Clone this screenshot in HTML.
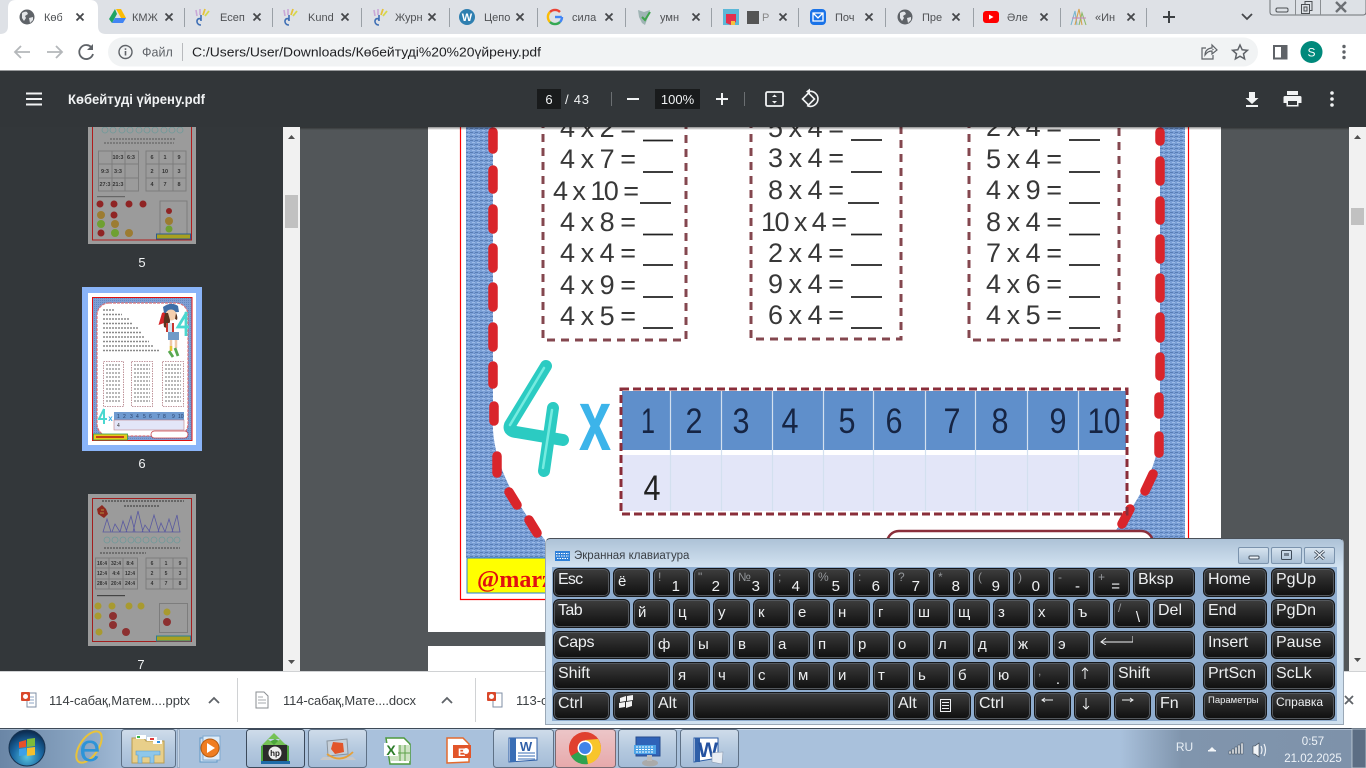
<!DOCTYPE html>
<html lang="ru"><head><meta charset="utf-8"><title>Көбейтуді үйрену.pdf</title>
<style>
html,body{margin:0;padding:0;width:1366px;height:768px;overflow:hidden;background:#fff;font-family:"Liberation Sans","Noto Sans CJK SC",sans-serif}
svg.base{position:absolute;left:0;top:0}
svg text{font-family:"Liberation Sans","DejaVu Sans",sans-serif}
.kb{position:absolute;left:545px;top:538px;width:799px;height:187px;border:1px solid #9aa8b6;border-top-color:#4a5058;border-radius:5px 5px 0 0;box-sizing:border-box;background:linear-gradient(#adc2d7 0,#d3e3f1 29px,#cfe0ef 100%)}
.blue{position:absolute;left:552px;top:567px;width:785px;height:154px;background:#8fadcf}
.ttl{position:absolute;left:574px;top:549px;font-size:11.5px;line-height:14px;color:#3a3f45;white-space:nowrap}
.wb{position:absolute;top:547px;height:17px;width:31px;box-sizing:border-box;border:1px solid #7b93ad;border-radius:2px;background:linear-gradient(#d6e3ef,#a9bfd5)}
.kr{position:absolute;left:0;width:0}
.k{position:absolute;top:0;height:100%;box-sizing:border-box;border:1px solid #15171a;border-radius:6px;box-shadow:inset 0 0 0 1px #54585d;background:linear-gradient(#3e3e3e 0,#2c2c2c 35%,#0f0f0f 100%);color:#eef0f2;font-size:16px;line-height:20px;padding:1px 0 0 4px;white-space:nowrap;overflow:hidden}
.l{font-size:15px;line-height:24px}
.k i{position:absolute;left:4px;top:1px;font-style:normal;font-size:12px;line-height:14px;color:#94979b}
.k b{position:absolute;right:9px;bottom:1px;font-weight:normal;font-size:15px;line-height:16px;color:#eef0f2}
</style></head><body>
<svg class="base" width="1366" height="768" viewBox="0 0 1366 768" xmlns="http://www.w3.org/2000/svg">
<defs>
<pattern id="denim" width="5" height="4" patternUnits="userSpaceOnUse"><rect width="5" height="4" fill="#7a9fd6"/><rect x="0" y="0" width="3" height="1" fill="#587db5"/><rect x="2" y="2" width="3" height="1" fill="#9cbbe8"/><rect x="4" y="1" width="1" height="1" fill="#6488c0"/></pattern>
<pattern id="denim2" width="2" height="2" patternUnits="userSpaceOnUse"><rect width="2" height="2" fill="#7f9fd4"/><rect width="1" height="1" fill="#6688c0"/></pattern>
<g id="cl"><path d="M-3.5-3.5L3.5 3.5M3.5-3.5L-3.5 3.5" stroke="#45474a" stroke-width="1.8" fill="none"/></g>
<g id="globe"><circle r="7.5" fill="#5f6368"/><path d="M-5-4q3-2 5-1l1 2-3 2 1 2-2 3-2-3zM2 1l4-1 0 3-3 3z" fill="#e3e5e8"/></g>
<g id="hand"><path d="M-1 8c-4 0-5-4-3-6 2-1 3 0 3 2v-6" fill="none" stroke="#3f6fb5" stroke-width="1.6"/><path d="M-5-1l-1-6M-2-2v-6" stroke="#c9a7d6" stroke-width="1.6"/><path d="M1-2l2-6" stroke="#e6c13c" stroke-width="1.8"/><path d="M3-1l4-5" stroke="#d7d84b" stroke-width="1.8"/></g>
<g id="gg"><path d="M6.8 0H0" stroke="#4285f4" stroke-width="2.4"/><path d="M5-5A7 7 0 0 0-5-5" fill="none" stroke="#ea4335" stroke-width="2.4"/><path d="M-5-5A7 7 0 0 0-5 5" fill="none" stroke="#fbbc05" stroke-width="2.4"/><path d="M-5 5A7 7 0 0 0 5 5" fill="none" stroke="#34a853" stroke-width="2.4"/><path d="M5 5A7 7 0 0 0 7 0" fill="none" stroke="#4285f4" stroke-width="2.4"/></g>
<linearGradient id="tb" x1="0" x2="1" y1="0" y2="0"><stop offset="0" stop-color="#6a86a6"/><stop offset=".06" stop-color="#8aa5c2"/><stop offset=".1" stop-color="#a9c1dc"/><stop offset=".82" stop-color="#a9c1dc"/><stop offset=".865" stop-color="#8095ad"/><stop offset="1" stop-color="#7e92aa"/></linearGradient>
<linearGradient id="btn" x1="0" x2="0" y1="0" y2="1"><stop offset="0" stop-color="#cfdcea"/><stop offset=".5" stop-color="#b5c9df"/><stop offset="1" stop-color="#a4bcd7"/></linearGradient>
<linearGradient id="btnc" x1="0" x2="0" y1="0" y2="1"><stop offset="0" stop-color="#ecc6c8"/><stop offset="1" stop-color="#e7a9ab"/></linearGradient>
<radialGradient id="orb" cx=".5" cy=".75" r=".7"><stop offset="0" stop-color="#58c2dd"/><stop offset=".55" stop-color="#1b6aa5"/><stop offset="1" stop-color="#0c2f55"/></radialGradient>
<linearGradient id="sh" x1="0" x2="0" y1="0" y2="1"><stop offset="0" stop-color="#000" stop-opacity=".45"/><stop offset="1" stop-color="#000" stop-opacity="0"/></linearGradient>
</defs>

<!-- tab strip -->
<rect width="1366" height="34" fill="#dee1e6"/>
<path d="M0 34Q8 34 8 26V8Q8 0 16 0H90Q98 0 98 8V26Q98 34 106 34Z" fill="#fff"/>
<g font-size="11" fill="#4f5154">
<use href="#globe" x="27" y="17"/><text x="44" y="21">Көб</text><rect x="62" y="8" width="8" height="18" fill="#fff" opacity=".7"/><use href="#cl" x="80" y="17"/>
<path d="M116 9h5l5 9h-5z" fill="#fbbc05"/><path d="M115 9l-6 10 3 4 5-9z" fill="#1fa463"/><path d="M112 23h11l3-5h-11z" fill="#4285f4"/><text x="132" y="21">КМЖ</text><use href="#cl" x="169" y="17"/>
<use href="#hand" x="202" y="17"/><text x="220" y="21">Есеп</text><use href="#cl" x="257" y="17"/>
<use href="#hand" x="290" y="17"/><text x="308" y="21">Kund</text><use href="#cl" x="345" y="17"/>
<use href="#hand" x="380" y="17"/><text x="395" y="21">Журн</text><use href="#cl" x="432" y="17"/>
<circle cx="467" cy="17" r="8" fill="#2f7fb0"/><text x="467" y="21" text-anchor="middle" font-size="11" font-weight="bold" fill="#fff" font-family="Liberation Serif">W</text><text x="484" y="21">Цепо</text><use href="#cl" x="520" y="17"/>
<use href="#gg" x="555" y="17"/><text x="572" y="21">сила</text><use href="#cl" x="609" y="17"/>
<path d="M638 10l6 2 6-2-2 7-3 8-3-2-3-6z" fill="#9fb4b4"/><path d="M642 17l3 3 5-8" fill="none" stroke="#3fa34d" stroke-width="2"/><text x="660" y="21">умн</text><use href="#cl" x="696" y="17"/>
<rect x="723" y="9" width="16" height="16" fill="#5bb8d8"/><path d="M726 14h10v8l-5 3-5-2z" fill="#e3304e"/><rect x="731" y="21" width="4" height="4" fill="#f6c23c"/><rect x="747" y="11" width="12" height="13" fill="#555"/><text x="762" y="21" fill="#888">P</text><use href="#cl" x="783" y="17"/>
<rect x="810" y="9" width="16" height="16" rx="4" fill="#1a73e8"/><path d="M813 13h10v8h-10zM813 13l5 5 5-5" fill="none" stroke="#fff" stroke-width="1.3"/><text x="835" y="21">Поч</text><use href="#cl" x="869" y="17"/>
<use href="#globe" x="905" y="17"/><text x="922" y="21">Пре</text><use href="#cl" x="956" y="17"/>
<rect x="983" y="11" width="16" height="12" rx="3" fill="#f00"/><path d="M989 14.500l4.500 2.500-4.500 2.500z" fill="#fff"/><text x="1007" y="21">Әле</text><use href="#cl" x="1044" y="17"/>
<g fill="none" stroke-width="1.1"><path d="M1071 25l4-14 2 14" stroke="#7bb6cf"/><path d="M1075 25l4-16 3 16" stroke="#d7a24f"/><path d="M1079 25l3-12 4 12" stroke="#8db96a"/><path d="M1072 18h14" stroke="#c887b9"/></g><text x="1095" y="21">«Ин</text><use href="#cl" x="1131" y="17"/>
</g>
<g stroke="#9aa0a6" stroke-width="1"><path d="M184.500 8v19M272.500 8v19M361.500 8v19M449.500 8v19M537.500 8v19M625.500 8v19M711.500 8v19M798.500 8v19M885.500 8v19M973.500 8v19M1060.500 8v19M1146.500 8v19"/></g>
<path d="M1163 17h12M1169 11v12" stroke="#3c4043" stroke-width="2"/>
<path d="M1242 14l5 5 5-5" fill="none" stroke="#45474a" stroke-width="1.8"/>
<!-- window controls -->
<path d="M1270 0v12q0 3 3 3h90q3 0 3-3V0" fill="#dde1e6" stroke="#6f7377"/>
<path d="M1295.500 0v15M1320.500 0v15" stroke="#8a8e92"/>
<rect x="1276" y="8" width="12" height="4" rx="1.500" fill="none" stroke="#4b4f53"/>
<path d="M1305 4V1.500h7v9h-2" fill="none" stroke="#4b4f53"/><rect x="1301.500" y="4.500" width="8" height="9" fill="none" stroke="#4b4f53"/><rect x="1304" y="7" width="3" height="4" fill="none" stroke="#4b4f53"/>
<path d="M1336 2l10 10M1346 2l-10 10" stroke="#6c7075" stroke-width="2.400"/>

<!-- toolbar -->
<rect y="34" width="1366" height="37" fill="#fff"/>
<rect x="108" y="37.500" width="1150" height="29" rx="14.500" fill="#f1f3f4"/>
<path d="M30 52H15M21 46l-6 6 6 6" fill="none" stroke="#b4b7ba" stroke-width="1.800"/>
<path d="M47 52h15M56 46l6 6-6 6" fill="none" stroke="#b4b7ba" stroke-width="1.800"/>
<path d="M92 48a7 7 0 1 0 1 6" fill="none" stroke="#5f6368" stroke-width="1.800"/><path d="M93 44v6h-6z" fill="#5f6368"/>
<circle cx="125.500" cy="52" r="6.500" fill="none" stroke="#5f6368" stroke-width="1.400"/><rect x="124.700" y="51" width="1.600" height="4.500" fill="#5f6368"/><rect x="124.700" y="48.300" width="1.600" height="1.600" fill="#5f6368"/>
<text x="142" y="56.500" font-size="12.500" fill="#5f6368">Файл</text>
<rect x="182" y="43" width="1" height="18" fill="#b8babd"/>
<text x="192" y="56.500" font-size="13" fill="#202124" textLength="349" lengthAdjust="spacingAndGlyphs">C:/Users/User/Downloads/Көбейтуді%20%20үйрену.pdf</text>
<path d="M1213 50v-1m0 6v4h-11v-11h4" fill="none" stroke="#5f6368" stroke-width="1.200"/><path d="M1205 55c0-5 4-7 7-7v-3l5 5-5 4v-3c-3 0-5 1-7 4z" fill="none" stroke="#5f6368" stroke-width="1.200"/>
<path d="M1240 45l2.200 4.800 5.200.5-3.900 3.500 1.100 5.100-4.600-2.700-4.600 2.700 1.100-5.100-3.900-3.500 5.200-.5z" fill="none" stroke="#5f6368" stroke-width="1.500"/>
<rect x="1274" y="46" width="12.500" height="12.500" fill="none" stroke="#5f6368" stroke-width="2"/><rect x="1281" y="46" width="5.500" height="12.500" fill="#5f6368"/>
<ellipse cx="1311.500" cy="52" rx="11" ry="11" fill="#00897b"/><text x="1311.500" y="56.500" text-anchor="middle" font-size="12" fill="#fff">S</text>
<circle cx="1344" cy="46.500" r="1.700" fill="#5f6368"/><circle cx="1344" cy="52" r="1.700" fill="#5f6368"/><circle cx="1344" cy="57.500" r="1.700" fill="#5f6368"/>

<!-- main -->
<rect x="300" y="127" width="1049" height="544" fill="#525659"/>
<rect x="428" y="127" width="793" height="505" fill="#fff"/>
<rect x="428" y="646" width="793" height="25" fill="#fff"/>
<!-- worksheet -->
<path d="M466 127H493V430Q496 480 545 540V558H466Z" fill="url(#denim)"/>
<path d="M1160 127H1185V540H1108Q1158 480 1160 430Z" fill="url(#denim)"/>
<path d="M460.500 127V599.500H1188.500V127" fill="none" stroke="#f00" stroke-width="1.200"/>
<g fill="none" stroke="#d9252b" stroke-width="9.500" stroke-linecap="round">
<path d="M493 132v17M493 170v19M493 209v20M493 248v20M493 287v20M493 327v20M493 366v18M494 406v15M497 456v17M509 492l8 13M529 520l8 13"/>
<path d="M1160 132v9M1160 161v20M1160 201v19M1160 239v20M1160 278v20M1160 317v21M1160 357v19M1159 397v17M1159 436v17M1153 474l-8 17M1130 509l-8 15"/>
</g>
<rect x="467" y="558" width="90" height="35" fill="#ff0" stroke="#2a7fd0" stroke-width="1"/>
<text x="477" y="587" font-size="24" font-weight="bold" fill="#e01010" style="font-family:'Liberation Serif',serif">@marz</text>
<rect x="887" y="531" width="266" height="30" rx="12" fill="#fff" stroke="#8a2e3a" stroke-width="2.500"/>
<!-- column boxes -->
<g fill="none" stroke="#84474f" stroke-width="3" stroke-dasharray="8 6">
<path d="M543 120V340H686V120"/><path d="M751 120V339H901V120"/><path d="M969 120V340H1119V120"/>
</g>
<g font-size="27" fill="#383838" style="font-family:'Liberation Sans',sans-serif">
<text x="560" y="137" textLength="76">4 x 2 =</text><text x="560" y="168" textLength="76">4 x 7 =</text><text x="553" y="200" textLength="86">4 x 10 =</text><text x="560" y="231" textLength="76">4 x 8 =</text><text x="560" y="262" textLength="76">4 x 4 =</text><text x="560" y="294" textLength="76">4 x 9 =</text><text x="560" y="325" textLength="76">4 x 5 =</text>
<text x="768" y="137" textLength="76">5 x 4 =</text><text x="768" y="167" textLength="76">3 x 4 =</text><text x="768" y="199" textLength="76">8 x 4 =</text><text x="761" y="231" textLength="86">10 x 4 =</text><text x="768" y="262" textLength="76">2 x 4 =</text><text x="768" y="293" textLength="76">9 x 4 =</text><text x="768" y="324" textLength="76">6 x 4 =</text>
<text x="986" y="136" textLength="76">2 x 4 =</text><text x="986" y="168" textLength="76">5 x 4 =</text><text x="986" y="199" textLength="76">4 x 9 =</text><text x="986" y="231" textLength="76">8 x 4 =</text><text x="986" y="262" textLength="76">7 x 4 =</text><text x="986" y="293" textLength="76">4 x 6 =</text><text x="986" y="324" textLength="76">4 x 5 =</text>
</g>
<path d="M643 140.500h30M643 172h30M640 203h31M643 234.500h30M643 265h30M643 297h30M643 328h30M851 140h31M851 172h31M848 203h31M851 234.500h31M851 265h31M851 297h31M851 328h31M1069 140h31M1069 172h31M1069 203h31M1069 234.500h31M1069 265h31M1069 297h31M1069 328h31" stroke="#222" stroke-width="1.800" fill="none"/>
<!-- big 4 and table -->
<path d="M546 366L510 425Q508 431 516 432L563 440M553 408L544 471" fill="none" stroke="#2bcbc2" stroke-width="12" stroke-linecap="round" stroke-linejoin="round"/>
<path d="M544 368L510 425M552 410L543 468" fill="none" stroke="#75ebe0" stroke-width="2.500" stroke-linecap="round"/>
<text transform="translate(595 450) scale(1 1.500)" text-anchor="middle" font-size="58" font-weight="bold" fill="#3cb4ea">x</text>
<rect x="622" y="391" width="504" height="59" fill="#5f8fcb"/>
<rect x="622" y="450" width="504" height="5" fill="#fff"/>
<rect x="622" y="455" width="504" height="56" fill="#e3e6f8"/>
<path d="M670.500 391V511M721.500 391V511M772.500 391V511M823.500 391V511M873.500 391V511M925.500 391V511M975.500 391V511M1027.500 391V511M1078.500 391V511" stroke="#d3e0ef" stroke-width="1.200"/>
<rect x="621" y="389" width="506" height="125" fill="none" stroke="#8a2e3a" stroke-width="3" stroke-dasharray="8 4"/>
<g font-size="35" fill="#162544" text-anchor="middle">
<text x="648" y="433" textLength="14" lengthAdjust="spacingAndGlyphs">1</text><text x="694" y="433" textLength="17" lengthAdjust="spacingAndGlyphs">2</text><text x="741" y="433" textLength="17" lengthAdjust="spacingAndGlyphs">3</text><text x="790" y="433" textLength="17" lengthAdjust="spacingAndGlyphs">4</text><text x="847" y="433" textLength="17" lengthAdjust="spacingAndGlyphs">5</text><text x="894" y="433" textLength="17" lengthAdjust="spacingAndGlyphs">6</text><text x="952" y="433" textLength="17" lengthAdjust="spacingAndGlyphs">7</text><text x="1000" y="433" textLength="17" lengthAdjust="spacingAndGlyphs">8</text><text x="1058" y="433" textLength="17" lengthAdjust="spacingAndGlyphs">9</text><text x="1104" y="433" textLength="33" lengthAdjust="spacingAndGlyphs">10</text>
<text x="652" y="500" fill="#222" textLength="17" lengthAdjust="spacingAndGlyphs">4</text></g>
<rect x="300" y="127" width="1049" height="3" fill="url(#sh)"/>
<!-- main scrollbar -->
<rect x="1349" y="127" width="17" height="544" fill="#f1f1f1"/>
<rect x="1351" y="208" width="13" height="17" fill="#c1c1c1"/>
<path d="M1354 139l3.500-4 3.500 4z" fill="#505050"/><path d="M1354 658l3.500 4 3.500-4z" fill="#505050"/>

<!-- sidebar -->
<rect x="0" y="127" width="283" height="544" fill="#33373a"/>
<rect x="283" y="127" width="17" height="544" fill="#f1f1f1"/>
<rect x="285" y="195" width="13" height="33" fill="#c1c1c1"/>
<path d="M288 139l3.500-4 3.500 4z" fill="#505050"/><path d="M288 660l3.500 4 3.500-4z" fill="#505050"/>
<!-- thumb 5 -->
<rect x="88" y="127" width="108" height="117" fill="#9b9b9b"/>
<path d="M92.500 127V240H191.500V127" fill="none" stroke="#b01c1c" stroke-width="1"/>
<g fill="none" stroke="#6e9a9a" stroke-width=".8"><circle cx="105" cy="130" r="3"/><circle cx="113" cy="130" r="3"/><circle cx="122" cy="130" r="3"/><circle cx="130" cy="130" r="3"/><circle cx="139" cy="130" r="3"/><circle cx="147" cy="130" r="3"/><circle cx="155" cy="130" r="3"/><circle cx="164" cy="130" r="3"/><circle cx="172" cy="130" r="3"/><circle cx="180" cy="130" r="3"/></g>
<path d="M110 139h65M104 143h70" stroke="#666" stroke-width="1.200" stroke-dasharray="2 1"/>
<g fill="none" stroke="#7d7d7d" stroke-width="1"><path d="M98.500 151h40v40h-40zM98.500 164h40M98.500 178h40M112 151v40M125 151v40M146 151h40v40h-40zM146 164h40M146 178h40M159 151v40M173 151v40"/><rect x="160" y="201" width="27" height="34"/></g>
<g font-size="5.500" font-weight="bold" fill="#333" text-anchor="middle"><text x="118" y="159">10:3</text><text x="131" y="159">6:3</text><text x="105" y="173">9:3</text><text x="118" y="173">3:3</text><text x="105" y="186">27:3</text><text x="118" y="186">21:3</text><text x="152" y="159">6</text><text x="165" y="159">1</text><text x="179" y="159">9</text><text x="152" y="173">2</text><text x="165" y="173">10</text><text x="179" y="173">3</text><text x="152" y="186">4</text><text x="165" y="186">7</text><text x="179" y="186">8</text></g>
<rect x="97" y="196" width="28" height="1.200" fill="#666"/>
<g fill="#8f2424"><circle cx="100" cy="204" r="3.500"/><circle cx="114" cy="204" r="3.500"/><circle cx="129" cy="204" r="3.500"/><circle cx="143" cy="204" r="3.500"/><circle cx="114" cy="215" r="3.500"/><circle cx="169" cy="211" r="3"/><circle cx="101" cy="233" r="3.500"/></g>
<g fill="#9c7c32"><circle cx="101" cy="215" r="4"/><circle cx="115" cy="224" r="4"/><circle cx="129" cy="233" r="4"/><circle cx="169" cy="221" r="4"/></g>
<g fill="#6fa032"><circle cx="101" cy="224" r="4"/><circle cx="115" cy="233" r="4"/><circle cx="169" cy="229" r="3.500"/></g>
<rect x="156.500" y="234" width="34" height="5" fill="#a8a020" stroke="#2b5c8f"/>
<!-- thumb 6 -->
<rect x="82" y="287" width="120" height="164" fill="#8ab4f8"/>
<rect x="88" y="293" width="108" height="152" fill="#fff"/>
<rect x="92.500" y="297.500" width="99.500" height="143" fill="url(#denim2)" stroke="#e01010" stroke-width="1"/>
<rect x="97" y="303" width="91" height="133" rx="12" fill="#fff" stroke="#d9737b" stroke-width="1.200" stroke-dasharray="3 1"/>
<path d="M103 310h12M103 314.500h19M103 319h26M103 323.500h30M103 328h35M103 332.500h38M103 337h42M103 341.500h46M103 346h50M103 350.500h56" stroke="#8a8a8a" stroke-width="1.500" stroke-dasharray="2 1" fill="none"/>
<!-- girl -->
<path d="M158.500 325l3.500-12 7-3 1 12-6 1z" fill="#d42428"/>
<path d="M163 307q8-6 15-1l1 6-15 1z" fill="#3f6fa8"/>
<circle cx="171" cy="315" r="5.500" fill="#f5cfae"/><path d="M165 313q-2 9-1 14l5 2 1-9-2-7z" fill="#5a3420"/><path d="M176 313q2 4 1 7l-2-1z" fill="#5a3420"/>
<rect x="166" y="323" width="8" height="9" fill="#d4e4ef"/><path d="M167 323v9M173 323v9" stroke="#c8362f" stroke-width="2"/><rect x="168" y="332" width="11" height="8" fill="#6f9ac7"/>
<path d="M171 340v11M176 340v8" stroke="#f0c9a8" stroke-width="2.500"/><path d="M171 346v5" stroke="#e8c630" stroke-width="2.500"/><path d="M169 351l4 6M175 348l3 8" stroke="#58a850" stroke-width="2.800"/>
<path d="M187 312l-9 15h11M186 312v24" fill="none" stroke="#4ad8d0" stroke-width="2.800"/>
<!-- thumb tables -->
<g fill="#fff" stroke="#b07a82" stroke-width=".8" stroke-dasharray="1.500 1"><rect x="103.500" y="361.500" width="20" height="45"/><rect x="131.500" y="361.500" width="21" height="45"/><rect x="162.500" y="361.500" width="21" height="45"/></g>
<g fill="none" stroke="#a0a0a0" stroke-width="1.500" stroke-dasharray="2 1"><path d="M106 365h15M106 369h15M106 373h15M106 377h15M106 381h15M106 385h15M106 389h15M106 393h15M106 397h15M106 401h15M134 365h16M134 369h16M134 373h16M134 377h16M134 381h16M134 385h16M134 389h16M134 393h16M134 397h16M134 401h16M165 365h16M165 369h16M165 373h16M165 377h16M165 381h16M165 385h16M165 389h16M165 393h16M165 397h16M165 401h16"/></g>
<path d="M104 409l-5 10h8M104 409v15" fill="none" stroke="#4ad8d0" stroke-width="2"/>
<text x="110.500" y="421" font-size="8" font-weight="bold" text-anchor="middle" fill="#35aee6">x</text>
<rect x="114" y="412" width="70" height="8" fill="#6f9ad0"/><rect x="114" y="420" width="70" height="10" fill="#e3e6f8" stroke="#c08088" stroke-width=".6"/>
<g font-size="5" fill="#29406a"><text x="117" y="418">1</text><text x="123" y="418">2</text><text x="130" y="418">3</text><text x="136" y="418">4</text><text x="143" y="418">5</text><text x="149" y="418">6</text><text x="157" y="418">7</text><text x="163" y="418">8</text><text x="172" y="418">9</text><text x="178" y="418">10</text><text x="117" y="427" fill="#333">4</text></g>
<rect x="93.500" y="434" width="34" height="6" fill="#e8c81a" stroke="#31a04a" stroke-width=".8"/><rect x="96" y="436" width="28" height="2" fill="#c43f18"/>
<rect x="151" y="431" width="37" height="7" rx="3.500" fill="#fff" stroke="#c94048" stroke-width=".8"/>
<!-- thumb 7 -->
<rect x="88" y="494" width="108" height="152" fill="#9b9b9b"/>
<rect x="92.500" y="498.500" width="99" height="143" fill="none" stroke="#a31e1e" stroke-width="1"/>
<path d="M102 501h82M124 506h36" stroke="#555" stroke-width="1.500" stroke-dasharray="2 1"/>
<path d="M102 505l4 4 2 5-4 4-6-4-1-5z" fill="#8e2a20"/><path d="M101 510h3M100 513h4" stroke="#b09040"/>
<g fill="none" stroke="#5a5aa0" stroke-width=".8"><path d="M103 532l4-13 4 13zM112 532l3-8 5 8zM120 532l3-11 4 11zM126 532l5-16 4 16zM133 532l5-21 5 21zM142 532l3-7 5 7zM149 532l5-17 5 17zM158 532l3-9 4 9zM165 532l4-13 4 13zM172 532l5-17 3 17z"/></g>
<g fill="none" stroke="#6e9a9a" stroke-width=".8"><circle cx="107" cy="540" r="3"/><circle cx="115" cy="540" r="3"/><circle cx="123" cy="540" r="3"/><circle cx="131" cy="540" r="3"/><circle cx="138" cy="540" r="3"/><circle cx="146" cy="540" r="3"/><circle cx="154" cy="540" r="3"/><circle cx="162" cy="540" r="3"/><circle cx="170" cy="540" r="3"/><circle cx="177" cy="540" r="3"/></g>
<path d="M104 548h76M100 553h46" stroke="#555" stroke-width="1.200" stroke-dasharray="2 1"/>
<g fill="none" stroke="#7d7d7d"><path d="M95.500 558h42v31h-42zM95.500 568h42M95.500 579h42M109 558v31M123 558v31M146 558h41v31h-41zM146 568h41M146 579h41M160 558v31M173 558v31"/><rect x="159.500" y="603.500" width="28" height="29"/></g>
<g font-size="5" font-weight="bold" fill="#333" text-anchor="middle"><text x="102" y="565">16:4</text><text x="116" y="565">32:4</text><text x="130" y="565">8:4</text><text x="102" y="575">12:4</text><text x="116" y="575">4:4</text><text x="130" y="575">12:4</text><text x="102" y="585">28:4</text><text x="116" y="585">20:4</text><text x="130" y="585">24:4</text><text x="152" y="565">6</text><text x="166" y="565">1</text><text x="180" y="565">9</text><text x="152" y="575">2</text><text x="166" y="575">5</text><text x="180" y="575">3</text><text x="152" y="585">4</text><text x="166" y="585">7</text><text x="180" y="585">8</text></g>
<rect x="97" y="595" width="28" height="1.200" fill="#444"/>
<g fill="#a89a30"><circle cx="98" cy="606" r="3.500"/><circle cx="112" cy="606" r="3.500"/><circle cx="129" cy="606" r="3.500"/><circle cx="141" cy="606" r="3.500"/><circle cx="98" cy="616" r="3.500"/><circle cx="99" cy="632" r="3.500"/><circle cx="167" cy="612" r="3.500"/></g>
<g fill="#8c3030"><circle cx="113" cy="616" r="4"/><circle cx="113" cy="625" r="4"/><circle cx="126" cy="632" r="4"/><circle cx="167" cy="622" r="4"/></g>
<rect x="156.500" y="636" width="34" height="5" fill="#a8a020" stroke="#2b7f8f"/>
<g fill="#f1f3f4" font-size="13" text-anchor="middle"><text x="142" y="267">5</text><text x="142" y="468">6</text><text x="141" y="669">7</text></g>

<!-- pdf toolbar -->
<rect y="70.500" width="1366" height="56.500" fill="#323639"/>
<path d="M26 93.500h16M26 99h16M26 104.500h16" stroke="#f1f3f4" stroke-width="2"/>
<text x="68" y="104" font-size="13.500" font-weight="bold" fill="#f1f3f4" textLength="137" lengthAdjust="spacingAndGlyphs">Көбейтуді үйрену.pdf</text>
<rect x="537" y="89" width="24" height="20" fill="#191b1c"/><text x="549" y="104" text-anchor="middle" font-size="13" fill="#f1f3f4">6</text>
<text x="565" y="104" font-size="13" fill="#f1f3f4" textLength="24">/ 43</text>
<rect x="611" y="92" width="1" height="14" fill="#6b6f72"/>
<path d="M627 99h12" stroke="#f1f3f4" stroke-width="2"/>
<rect x="655" y="89" width="45" height="20" fill="#191b1c"/><text x="677.500" y="104" text-anchor="middle" font-size="13" fill="#f1f3f4">100%</text>
<path d="M716 99h12M722 93v12" stroke="#f1f3f4" stroke-width="2"/>
<rect x="744" y="92" width="1" height="14" fill="#6b6f72"/>
<rect x="766" y="92" width="17" height="14" rx="1.500" fill="none" stroke="#f1f3f4" stroke-width="1.800"/><path d="M772 97l2.500-2.500L777 97zM772 101l2.500 2.500L777 101z" fill="#f1f3f4"/>
<path d="M809 91.500a7.500 7.500 0 1 1-2 14" fill="none" stroke="#f1f3f4" stroke-width="1.600"/><path d="M810 88.500v6l-4-3z" fill="#f1f3f4"/><path d="M808.500 93l-6 6 6 6 6-6z" fill="none" stroke="#f1f3f4" stroke-width="1.600"/>
<path d="M1249 92h6v6h3.500l-6.500 6-6.500-6h3.500z" fill="#f1f3f4"/><rect x="1246" y="105" width="12" height="2" fill="#f1f3f4"/>
<path d="M1287 91h11v4h-11zM1285 96h15q1.500 0 1.500 1.500V103h-3v3.500h-12V103h-3v-5.500q0-1.500 1.500-1.500z" fill="#f1f3f4"/><rect x="1288" y="101" width="9" height="4" fill="#323639"/>
<circle cx="1332" cy="93" r="1.800" fill="#f1f3f4"/><circle cx="1332" cy="99" r="1.800" fill="#f1f3f4"/><circle cx="1332" cy="105" r="1.800" fill="#f1f3f4"/>

<!-- shelf -->
<rect y="671" width="1366" height="57" fill="#fff"/><rect y="671" width="1366" height="1" fill="#d0d2d4"/>
<rect x="27" y="693" width="9" height="14" fill="#fff" stroke="#7f8fa6"/><path d="M29 697h5M29 700h5M29 703h5" stroke="#8ea4c4"/>
<rect x="21" y="692" width="9" height="9" rx="1" fill="#d9482b"/><circle cx="25.500" cy="696.500" r="2.500" fill="#fff"/>
<text x="49" y="705" font-size="13" fill="#3c4043" textLength="141">114-сабақ,Матем....pptx</text>
<path d="M209 703l5-5 5 5" fill="none" stroke="#5f6368" stroke-width="1.800"/>
<rect x="237" y="678" width="1" height="44" fill="#d0d2d4"/>
<path d="M256 692h8l4 4v12h-12z" fill="#fff" stroke="#8a8e92"/><path d="M258 697h5M258 700h8M258 703h8" stroke="#a5a8ac"/>
<text x="283" y="705" font-size="13" fill="#3c4043" textLength="133">114-сабақ,Мате....docx</text>
<path d="M442 703l5-5 5 5" fill="none" stroke="#5f6368" stroke-width="1.800"/>
<rect x="475" y="678" width="1" height="44" fill="#d0d2d4"/>
<rect x="493" y="693" width="9" height="14" fill="#fff" stroke="#7f8fa6"/><rect x="487" y="692" width="9" height="9" rx="1" fill="#d9482b"/><circle cx="491.500" cy="696.500" r="2.500" fill="#fff"/>
<text x="516" y="705" font-size="13" fill="#3c4043">113-с</text>
<path d="M1345 696l8 8M1353 696l-8 8" stroke="#5f6368" stroke-width="1.800"/>

<!-- taskbar -->
<rect y="728" width="1366" height="40" fill="url(#tb)"/>
<rect y="728" width="1366" height="1" fill="#3e4a58"/>
<rect y="729" width="1366" height="1" fill="#cfdceb" opacity=".6"/>
<circle cx="27" cy="748" r="18" fill="url(#orb)" stroke="#17324f"/>
<path d="M19 742l7-2v7l-7 1z" fill="#e8502a"/><path d="M27 739l8-1v8l-8 1z" fill="#7dbb3a"/><path d="M19 749l7-1v7l-7 1z" fill="#3da0e8"/><path d="M27 748l8-1v8l-8 1z" fill="#f5bf2c"/>
<ellipse cx="89" cy="747" rx="9" ry="18" transform="rotate(35 89 747)" fill="none" stroke="#e9c33a" stroke-width="2"/>
<text x="90" y="761" text-anchor="middle" font-size="38" fill="#2d94d8" style="font-family:'Liberation Sans',sans-serif">e</text>
<rect x="121.500" y="729.500" width="54" height="38" rx="3" fill="url(#btn)" stroke="#5f7186"/>
<rect x="177.500" y="729.500" width="2" height="38" fill="#c3d3e4" stroke="#7c90a7" stroke-width=".5"/>
<path d="M132 738h12l2 3h18v22h-32z" fill="#e8cf8a" stroke="#b89b4f"/><rect x="136" y="735" width="10" height="4" fill="#fff"/><rect x="137" y="736" width="3" height="2" fill="#39b54a"/><rect x="147" y="737" width="10" height="4" fill="#fff"/><rect x="150" y="738" width="4" height="2" fill="#e03a3a"/><rect x="153" y="740" width="9" height="4" fill="#fff"/><rect x="157" y="741" width="3" height="2" fill="#2d8fe0"/>
<path d="M136 751h24v4h-6v8h-4v-6h-8v6h-4v-8h-2z" fill="#8ec7ea" stroke="#5b9ac6" stroke-width=".6"/>
<rect x="200" y="738" width="17" height="24" fill="#c9dcef" stroke="#5f96c5"/><rect x="203" y="736" width="17" height="24" fill="#dfecf8" stroke="#7fa9cf"/>
<circle cx="210" cy="748" r="9" fill="#ef7d22" stroke="#b35c14"/><path d="M207 743l8 5-8 5z" fill="#fff"/>
<rect x="246.500" y="729.500" width="58" height="38" rx="3" fill="url(#btn)" stroke="#3c4a5b"/>
<path d="M261 746l14-7 14 7v18h-28z" fill="#4ca63c"/><path d="M268 739l6-6 6 6zM262 745l6-6 6 6zM274 745l6-6 6 6z" fill="#74c255"/>
<rect x="263" y="745" width="24" height="18" fill="#2b2b2b"/><rect x="261" y="761" width="29" height="3" fill="#1e6ca8"/><circle cx="275" cy="753" r="6.500" fill="#eee"/><text x="275" y="756" font-size="8" text-anchor="middle" font-weight="bold" fill="#222">hp</text>
<rect x="308.500" y="729.500" width="58" height="38" rx="3" fill="url(#btn)" stroke="#5f7186"/>
<path d="M327 741l20-2 1 15-20 2z" fill="#c6cfd8" stroke="#8a949e"/><path d="M333 742l10 1 1 9-9 2-4-5z" fill="#e2552a"/><path d="M323 757h30l3 3h-36z" fill="#c8c8c8"/><path d="M327 754q14 10 26-2" fill="none" stroke="#e5a13a" stroke-width="1.800"/>
<path d="M386 738h18l6 6v20h-20z" fill="#fff" stroke="#4f9a3e" stroke-width="1.500"/><rect x="390" y="745" width="20" height="16" fill="#cfe3c4"/><path d="M400 745v16M390 753h20M405 745v16" stroke="#5da14a"/><rect x="384" y="743" width="14" height="13" fill="#fff"/><text x="391" y="755" font-size="14" font-weight="bold" text-anchor="middle" fill="#2d7d2a">X</text>
<path d="M447 738h16l6 6v18l-22 1z" fill="#fff" stroke="#e36a2e" stroke-width="1.500"/><rect x="453" y="745" width="18" height="13" fill="#e2552a"/><text x="458" y="756" font-size="11" font-weight="bold" fill="#fff">E</text><circle cx="466" cy="751" r="3" fill="#fff"/>
<rect x="493.500" y="729.500" width="60" height="38" rx="3" fill="url(#btn)" stroke="#5f7186"/>
<path d="M509 738h28v22l-28 2z" fill="#fff" stroke="#2f5fa8" stroke-width="1"/><rect x="510" y="738" width="6" height="24" fill="#3a6eb5"/><path d="M518 753h17M518 756h17M518 759h17" stroke="#3a6eb5"/><text x="526" y="751" text-anchor="middle" font-size="13" font-weight="bold" fill="#2f5fa8">W</text>
<rect x="555.500" y="729.500" width="60" height="38" rx="3" fill="url(#btnc)" stroke="#7c6a72"/>
<circle cx="585" cy="748" r="16" fill="#e0402f"/><path d="M585 748L571 756A16 16 0 0 1 572 739Z" fill="#e0402f"/><path d="M585 748L571 756A16 16 0 0 0 588 764Z" fill="#2ea24f"/><path d="M585 748L588 764A16 16 0 0 0 598 739L585 740Z" fill="#f8c52b"/><circle cx="585" cy="748" r="7.500" fill="#fff"/><circle cx="585" cy="748" r="6" fill="#3f83e8"/>
<rect x="618.500" y="729.500" width="58" height="38" rx="3" fill="url(#btn)" stroke="#5f7186"/>
<rect x="636" y="737" width="24" height="19" fill="#2f63b8" stroke="#284d8e"/><rect x="634" y="745" width="22" height="9" fill="#4ea5e8"/><path d="M636 747h18M636 749.500h18M636 752h18" stroke="#fff" stroke-dasharray="2 1"/><ellipse cx="650" cy="763" rx="8" ry="3.500" fill="#aaa"/><rect x="647" y="755" width="5" height="6" fill="#bbb"/>
<rect x="680.500" y="729.500" width="58" height="38" rx="3" fill="url(#btn)" stroke="#5f7186"/>
<path d="M694 738h24v20l-24 4z" fill="#fff" stroke="#2f5fa8"/><rect x="695" y="738" width="5" height="24" fill="#2f5fa8"/><text x="708" y="757" text-anchor="middle" font-size="21" font-weight="bold" fill="#2452a0">W</text><path d="M712 753l11-1-1 12-10-2z" fill="#e8edf4" stroke="#8a9ab0" stroke-width=".6"/>
<!-- tray -->
<text x="1184.500" y="751" text-anchor="middle" font-size="12" fill="#e6edf4">RU</text>
<path d="M1208 751l4-4 4 4z" fill="#f2f5f8"/><rect x="1208" y="750" width="8" height="1.500" fill="#f2f5f8"/>
<g fill="#f5f7f9" stroke="#3a4652" stroke-width=".5"><rect x="1229" y="751" width="2" height="3"/><rect x="1232" y="749" width="2" height="5"/><rect x="1235" y="747" width="2" height="7"/><rect x="1238" y="745" width="2" height="9"/><rect x="1241" y="743" width="2" height="11"/></g>
<path d="M1253 746h2l4-3v14l-4-3h-2z" fill="#f2f5f8" stroke="#3a4652" stroke-width=".6"/><path d="M1261 746q2 4 0 8M1264 744q3 6 0 12" fill="none" stroke="#eef2f6" stroke-width="1.200"/>
<text x="1313" y="745" text-anchor="middle" font-size="11.500" fill="#eef3f8">0:57</text>
<text x="1313" y="762" text-anchor="middle" font-size="11.500" fill="#eef3f8">21.02.2025</text>
<rect x="1352" y="729" width="14" height="39" fill="#5c6e84" stroke="#c6d1dc" stroke-width=".8"/>
</svg>

<!-- on-screen keyboard -->
<div class="kb"></div>
<div class="blue"></div>
<svg style="position:absolute;left:555px;top:551px" width="15" height="11"><rect width="15" height="10" y="0" fill="#2f80d8"/><path d="M1 2.500h13M1 5h13M2 7.500h11" stroke="#fff" stroke-dasharray="1.500 1"/></svg>
<div class="ttl">Экранная клавиатура</div>
<div class="wb" style="left:1238px"><svg width="29" height="15" style="display:block"><rect x="10" y="8" width="10" height="3" rx="1" fill="#eef3f8" stroke="#3e4a58"/></svg></div>
<div class="wb" style="left:1271px"><svg width="29" height="15" style="display:block"><rect x="9.500" y="2.500" width="10" height="9" rx="1" fill="none" stroke="#3e4a58"/><rect x="12" y="5" width="5" height="3" fill="#3e4a58" opacity=".6"/></svg></div>
<div class="wb" style="left:1304px"><svg width="29" height="15" style="display:block"><path d="M10 3l9 8M19 3l-9 8" stroke="#3e4a58" stroke-width="3"/><path d="M10 3l9 8M19 3l-9 8" stroke="#eef3f8" stroke-width="1.200"/></svg></div>

<div class="kr" style="top:568px;height:29px">
<div class="k" style="left:553px;width:57px;letter-spacing:-.8px">Esc</div><div class="k l" style="left:613px;width:37px">ё</div>
<div class="k" style="left:653px;width:37px"><i>!</i><b>1</b></div><div class="k" style="left:693px;width:37px"><i>"</i><b>2</b></div><div class="k" style="left:733px;width:37px"><i>№</i><b>3</b></div><div class="k" style="left:773px;width:37px"><i>;</i><b>4</b></div><div class="k" style="left:813px;width:37px"><i>%</i><b>5</b></div><div class="k" style="left:853px;width:37px"><i>:</i><b>6</b></div><div class="k" style="left:893px;width:37px"><i>?</i><b>7</b></div><div class="k" style="left:933px;width:37px"><i>*</i><b>8</b></div><div class="k" style="left:973px;width:37px"><i>(</i><b>9</b></div><div class="k" style="left:1013px;width:37px"><i>)</i><b>0</b></div><div class="k" style="left:1053px;width:37px"><i>-</i><b>-</b></div><div class="k" style="left:1093px;width:37px"><i>+</i><b>=</b></div>
<div class="k" style="left:1133px;width:62px">Bksp</div><div class="k" style="left:1203px;width:64px">Home</div><div class="k" style="left:1271px;width:64px">PgUp</div>
</div>
<div class="kr" style="top:599px;height:29px">
<div class="k" style="left:553px;width:77px;letter-spacing:-.6px">Tab</div><div class="k l" style="left:633px;width:37px">й</div><div class="k l" style="left:673px;width:37px">ц</div><div class="k l" style="left:713px;width:37px">у</div><div class="k l" style="left:753px;width:37px">к</div><div class="k l" style="left:793px;width:37px">е</div><div class="k l" style="left:833px;width:37px">н</div><div class="k l" style="left:873px;width:37px">г</div><div class="k l" style="left:913px;width:37px">ш</div><div class="k l" style="left:953px;width:37px">щ</div><div class="k l" style="left:993px;width:37px">з</div><div class="k l" style="left:1033px;width:37px">х</div><div class="k l" style="left:1073px;width:37px">ъ</div>
<div class="k" style="left:1113px;width:37px"><i>/</i><b>\</b></div><div class="k" style="left:1153px;width:42px">Del</div><div class="k" style="left:1203px;width:64px">End</div><div class="k" style="left:1271px;width:64px">PgDn</div>
</div>
<div class="kr" style="top:631px;height:28px">
<div class="k" style="left:553px;width:97px;letter-spacing:-.3px">Caps</div><div class="k l" style="left:653px;width:37px">ф</div><div class="k l" style="left:693px;width:37px">ы</div><div class="k l" style="left:733px;width:37px">в</div><div class="k l" style="left:773px;width:37px">а</div><div class="k l" style="left:813px;width:37px">п</div><div class="k l" style="left:853px;width:37px">р</div><div class="k l" style="left:893px;width:37px">о</div><div class="k l" style="left:933px;width:37px">л</div><div class="k l" style="left:973px;width:37px">д</div><div class="k l" style="left:1013px;width:37px">ж</div><div class="k l" style="left:1053px;width:37px">э</div>
<div class="k" style="left:1093px;width:102px"><svg width="34" height="10" style="position:absolute;left:5px;top:3px"><path d="M34 1v6H2M7 3L2 7l5 3" fill="none" stroke="#eef0f2" stroke-width="1"/></svg></div><div class="k" style="left:1203px;width:64px">Insert</div><div class="k" style="left:1271px;width:64px">Pause</div>
</div>
<div class="kr" style="top:662px;height:28px">
<div class="k" style="left:553px;width:117px">Shift</div><div class="k l" style="left:673px;width:37px">я</div><div class="k l" style="left:713px;width:37px">ч</div><div class="k l" style="left:753px;width:37px">с</div><div class="k l" style="left:793px;width:37px">м</div><div class="k l" style="left:833px;width:37px">и</div><div class="k l" style="left:873px;width:37px">т</div><div class="k l" style="left:913px;width:37px">ь</div><div class="k l" style="left:953px;width:37px">б</div><div class="k l" style="left:993px;width:37px">ю</div>
<div class="k" style="left:1033px;width:37px"><i>,</i><b>.</b></div><div class="k" style="left:1073px;width:37px"><svg width="12" height="14" style="position:absolute;left:6px;top:3px"><path d="M5 13V2M2 5l3-3 3 3" fill="none" stroke="#eef0f2"/></svg></div><div class="k" style="left:1113px;width:82px">Shift</div><div class="k" style="left:1203px;width:64px">PrtScn</div><div class="k" style="left:1271px;width:64px">ScLk</div>
</div>
<div class="kr" style="top:692px;height:28px">
<div class="k" style="left:553px;width:57px">Ctrl</div>
<div class="k" style="left:613px;width:37px"><svg width="16" height="14" style="position:absolute;left:5px;top:2px"><path d="M1 3l6-2v5l-6 1zM8 1l6-1v5l-6 1zM0 8l6-1v5l-6 1zM7 7l6-1v5l-6 2z" fill="#f2f2f2"/></svg></div>
<div class="k" style="left:653px;width:37px">Alt</div><div class="k" style="left:693px;width:197px"></div><div class="k" style="left:893px;width:37px">Alt</div>
<div class="k" style="left:933px;width:38px"><svg width="12" height="14" style="position:absolute;left:6px;top:6px"><rect x=".5" y=".5" width="10" height="12" fill="none" stroke="#eef0f2"/><path d="M2 3.500h7M2 6.500h7M2 9.500h7" stroke="#eef0f2"/></svg></div>
<div class="k" style="left:974px;width:57px">Ctrl</div>
<div class="k" style="left:1034px;width:37px"><svg width="14" height="10" style="position:absolute;left:6px;top:3px"><path d="M12 4H1M4 2L1 4l3 2" fill="none" stroke="#eef0f2"/></svg></div>
<div class="k" style="left:1074px;width:37px"><svg width="12" height="14" style="position:absolute;left:6px;top:4px"><path d="M5 1v11M2 9l3 3 3-3" fill="none" stroke="#eef0f2"/></svg></div>
<div class="k" style="left:1114px;width:37px"><svg width="14" height="10" style="position:absolute;left:6px;top:3px"><path d="M1 4h11M9 2l3 2-3 2" fill="none" stroke="#eef0f2"/></svg></div>
<div class="k" style="left:1155px;width:40px">Fn</div>
<div class="k" style="left:1203px;width:64px;font-size:9.500px;line-height:14px;padding-left:4px">Параметры</div>
<div class="k" style="left:1271px;width:64px;font-size:12px;line-height:16px;padding-left:4px">Справка</div>
</div>
</body></html>
